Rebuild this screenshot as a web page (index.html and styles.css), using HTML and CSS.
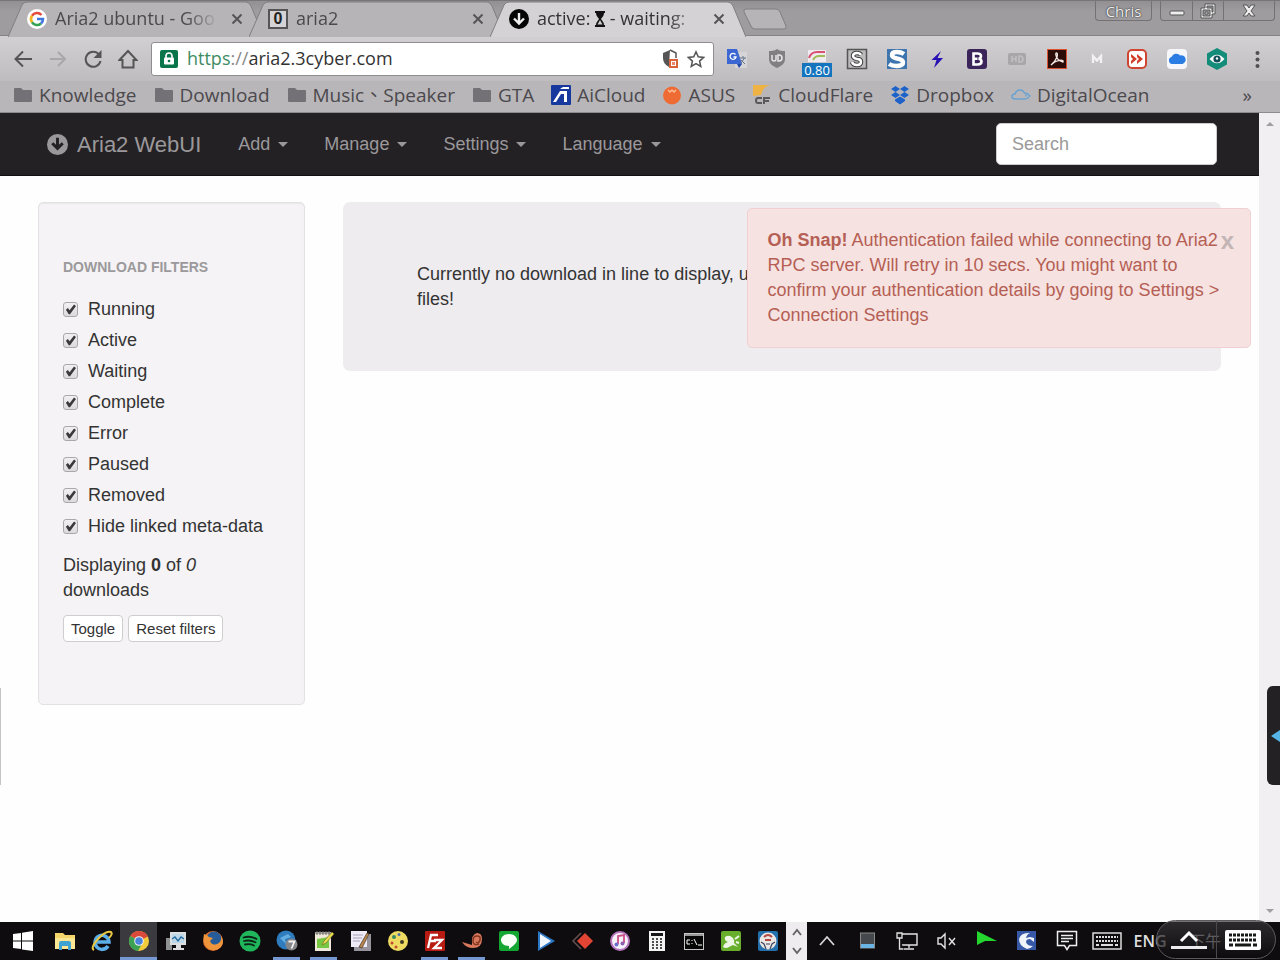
FILE: index.html
```html
<!DOCTYPE html>
<html lang="en">
<head>
<meta charset="utf-8">
<title>Aria2 WebUI</title>
<link rel="stylesheet" href="styles.css">
</head>
<body>
<header class="browser">
  <div class="tabstrip">
    <div class="tab">
      <svg class="tab-shape" viewBox="0 0 256 36" preserveAspectRatio="none"><path d="M0 36L14 4Q16 1 19 1H238Q241 1 243 5L256 36"/></svg>
      <svg class="tab-icon" viewBox="0 0 20 20"><circle cx="10" cy="10" r="10" fill="#fff"/><g fill="none" stroke-width="2.6"><path d="M14.5 6A6 6 0 0 0 5 6.700" stroke="#e34a3b"/><path d="M5 6.700A6 6 0 0 0 5 13.300" stroke="#f2b51d"/><path d="M5 13.300A6 6 0 0 0 14 14.500" stroke="#35a352"/><path d="M14 14.500A6 6 0 0 0 16 10H10" stroke="#3f78e0"/></g></svg>
      <span class="tab-title">Aria2 ubuntu - Goo</span>
      <button class="tab-close" aria-label="Close tab"><svg viewBox="0 0 12 12"><path d="M1.500 1.500l9 9M10.500 1.500l-9 9"/></svg></button>
    </div>
    <div class="tab">
      <svg class="tab-shape" viewBox="0 0 256 36" preserveAspectRatio="none"><path d="M0 36L14 4Q16 1 19 1H238Q241 1 243 5L256 36"/></svg>
      <span class="tab-icon zero-icon">0</span>
      <span class="tab-title">aria2</span>
      <button class="tab-close" aria-label="Close tab"><svg viewBox="0 0 12 12"><path d="M1.500 1.500l9 9M10.500 1.500l-9 9"/></svg></button>
    </div>
    <div class="tab tab-active">
      <svg class="tab-shape" viewBox="0 0 256 36" preserveAspectRatio="none"><path d="M0 36L14 4Q16 1 19 1H238Q241 1 243 5L256 36"/></svg>
      <svg class="tab-icon" viewBox="0 0 20 20"><circle cx="10" cy="10" r="10" fill="#050505"/><path d="M10 4v10M5 9.500l5 5 5-5" fill="none" stroke="#eee" stroke-width="2.400"/></svg>
      <span class="tab-title">active: <svg class="hourglass" viewBox="0 0 10 16"><path d="M0 0h10v2H9c0 3-2 4-3 6 1 2 3 3 3 6h1v2H0v-2h1c0-3 2-4 3-6C3 6 1 5 1 2H0z" fill="#111"/><path d="M5 9l2.500 4.500h-5z" fill="#ccc"/></svg> - waiting:</span>
      <button class="tab-close" aria-label="Close tab"><svg viewBox="0 0 12 12"><path d="M1.500 1.500l9 9M10.500 1.500l-9 9"/></svg></button>
    </div>
    <button class="new-tab" aria-label="New tab"><svg viewBox="0 0 44 22"><path d="M3 1h30q3 0 4 3l6 14q1 3-2 3H12q-3 0-4-3L1 4Q0 1 3 1z"/></svg></button>
    <div class="window-controls">
      <button class="profile">Chris</button>
      <div class="window-buttons">
        <button aria-label="Minimize"><svg viewBox="0 0 16 16"><rect x="1" y="8" width="14" height="4" rx="1"/></svg></button>
        <button aria-label="Restore"><svg viewBox="0 0 16 16"><path fill-rule="evenodd" d="M5 1h10v10h-3v4H1V5h4zM7 3v2h5v4h1V3zM3 7v6h7V7z"/><path d="M5 9h3v2H5z"/></svg></button>
        <button class="wide" aria-label="Close"><svg viewBox="0 0 16 16"><path d="M2 2h4l2 3 2-3h4l-4 6 4 5h-4l-2-3-2 3H2l4-5z"/></svg></button>
      </div>
    </div>
  </div>

  <div class="toolbar">
    <nav class="nav-buttons">
      <button aria-label="Back"><svg viewBox="0 0 20 20"><path d="M19 10H3M10 2.500L2.500 10l7.500 7.500"/></svg></button>
      <button class="dim" aria-label="Forward"><svg viewBox="0 0 20 20"><path d="M2 10h15M10 3l7 7-7 7"/></svg></button>
      <button aria-label="Reload"><svg viewBox="0 0 20 20"><path d="M16 5.500A7.500 7.500 0 1 0 17.500 12"/><path d="M18.500 1v8h-8z" fill="#555" stroke="none"/></svg></button>
      <button aria-label="Home"><svg viewBox="0 0 20 20"><path d="M1.500 11L10 2l8.500 9H15.500v7.500h-11V11z"/></svg></button>
    </nav>
    <div class="omnibox">
      <svg class="lock" viewBox="0 0 18 18"><rect width="18" height="18" rx="2" fill="#08754b"/><path d="M6 8V6a3 3 0 0 1 6 0v2" fill="none" stroke="#fff" stroke-width="1.600"/><rect x="4" y="7.500" width="10" height="7" rx="1" fill="#fff"/><circle cx="9" cy="11" r="1.300" fill="#08754b"/></svg>
      <div class="url"><span class="scheme">https</span><span class="slashes">://</span>aria2.3cyber.com</div>
      <svg class="omni-icon" viewBox="0 0 18 20"><path d="M9 1L2 4v5c0 4 2 7 6 9z" fill="#555"/><path d="M9 1l6 3v5" fill="none" stroke="#555" stroke-width="1.500"/><rect x="8" y="10" width="9" height="9" fill="#d9633b"/><rect x="10.500" y="12.500" width="4" height="4" fill="#e9896a" stroke="#fff"/></svg>
      <svg class="omni-icon" viewBox="0 0 20 20"><path d="M10 2l2.500 5.600 6 .6-4.500 4.100 1.300 6L10 15.200l-5.300 3.100 1.300-6-4.500-4.100 6-.6z" fill="none" stroke="#555" stroke-width="1.700"/></svg>
    </div>
    <div class="extensions">
      <button aria-label="Translate"><svg viewBox="0 0 22 22"><rect x="9" y="4" width="12" height="16" fill="#d5d5d7"/><path d="M1 1h10l5 15H1z" fill="#3c67d2"/><path d="M11 16h5l-3 4z" fill="#234aa9"/><path d="M9.500 6.500A3 3 0 1 0 10 9H7.500" stroke="#fff" stroke-width="1.300" fill="none"/><path d="M13 10h7M17 8v2M18.500 10l-4 6M15 12l4 4" stroke="#65758d" fill="none"/></svg></button>
      <button aria-label="uBlock"><svg viewBox="0 0 22 22"><path d="M11 1c3 2 5 2 8 2v8c0 5-4 7-8 9-4-2-8-4-8-9V3c3 0 5 0 8-2z" fill="#817f83"/><path d="M6 7v4q0 2 2 2t2-2V7M12 7h1q3 0 3 3t-3 3h-1z" fill="none" stroke="#e7e4e7" stroke-width="1.500"/></svg></button>
      <button class="speed" aria-label="Speed"><svg viewBox="0 0 22 22"><path d="M2 2h18v12H2z" fill="#eeeaf0"/><path d="M3 10q2-6 8-6h8" fill="none" stroke="#d95171" stroke-width="2"/><path d="M7 12q2-4 6-4h6" fill="none" stroke="#a3bd56" stroke-width="2"/></svg><span class="speed-badge">0.80</span></button>
      <button aria-label="Stylish"><svg viewBox="0 0 22 22"><rect x="1.500" y="1.500" width="19" height="19" fill="#bdbbbd" stroke="#555" stroke-width="1.500"/><path d="M15 7q-1-2-4-2-4 0-4 3 0 2 4 3 4 0 4 3t-4 3q-4 0-5-3" fill="none" stroke="#444" stroke-width="4.500"/><path d="M15 7q-1-2-4-2-4 0-4 3 0 2 4 3 4 0 4 3t-4 3q-4 0-5-3" fill="none" stroke="#fff" stroke-width="2.400"/></svg></button>
      <button aria-label="Session"><svg viewBox="0 0 22 22"><rect x="1" y="1" width="20" height="20" fill="#3f75ae"/><path d="M18 6q-3-2-7-2-5 0-5 3 0 2.500 5 3.500 6 1 6 4t-6 3.500q-5 0-8-2" fill="none" stroke="#fff" stroke-width="4.500"/></svg></button>
      <button aria-label="Power"><svg viewBox="0 0 22 22"><path d="M15 3L5.500 12h5L8 20l9-10h-5.500z" fill="#2811b4"/></svg></button>
      <button aria-label="Bootstrap"><svg viewBox="0 0 22 22"><rect x="1" y="1" width="20" height="20" rx="3" fill="#3b2459"/><path d="M7.500 5.500V16.500h4q4 0 4-3 0-2.500-3-2.800 2.500-.4 2.500-2.600 0-2.600-4-2.600zM7.500 10.800h4" fill="none" stroke="#fff" stroke-width="2.600"/></svg></button>
      <button aria-label="HD"><svg viewBox="0 0 22 22"><rect x="2" y="5" width="18" height="12" rx="2" fill="#a8a6a9"/><path d="M6 8v6M10 8v6M6 11h4M13 8v6h1q3 0 3-3t-3-3z" fill="none" stroke="#c1bfc2" stroke-width="1.600"/></svg></button>
      <button aria-label="Acrobat"><svg viewBox="0 0 22 22"><rect x="1.500" y="1.500" width="19" height="19" fill="#2c0d0a" stroke="#dd5132"/><path d="M5 17q4-3 6-8 1-4-.5-4t0 4q2 4 6.500 5 1-2-3-1.700-5 .5-9 4.700z" fill="none" stroke="#f4e9e7" stroke-width="1.300"/></svg></button>
      <button aria-label="Mail"><svg viewBox="0 0 22 22"><path d="M7 15V8l4 4.500L15 8v7" fill="none" stroke="#f3f1f3" stroke-width="2.300"/></svg></button>
      <button aria-label="Fast forward"><svg viewBox="0 0 22 22"><rect x="2" y="2" width="18" height="18" rx="4" fill="#fff" stroke="#cf4531" stroke-width="2"/><path d="M5 6l6 5-6 5v-3l2-2-2-2zM11 6l6 5-6 5v-3l2-2-2-2z" fill="#d13d28"/></svg></button>
      <button aria-label="Cloud"><svg viewBox="0 0 22 22"><rect x="1" y="1" width="20" height="20" rx="4" fill="#f5f7fb"/><path d="M6 16a3.600 3.600 0 0 1-.5-7A5 5 0 0 1 14 7.500a4 4 0 0 1 2.500 8.500z" fill="#2b7de4"/></svg></button>
      <button aria-label="Eye"><svg viewBox="0 0 22 22"><path d="M11 0l10 5.500v11L11 22 1 16.500v-11z" fill="#138d79"/><path d="M3.500 11q7.500-8.500 15 0-7.500 8.500-15 0z" fill="#fff"/><circle cx="11" cy="11" r="3.600" fill="#134f59"/><circle cx="11" cy="10.500" r="1.200" fill="#fff"/></svg></button>
      <button aria-label="Menu"><svg viewBox="0 0 22 22"><g fill="#514f52"><circle cx="11.500" cy="5" r="2"/><circle cx="11.500" cy="11.500" r="2"/><circle cx="11.500" cy="18" r="2"/></g></svg></button>
    </div>
  </div>

  <nav class="bookmarks">
    <a href="#"><svg viewBox="0 0 20 20"><path d="M1 4q0-1 1-1h6l2 2h8q1 0 1 1v10q0 1-1 1H2q-1 0-1-1z" fill="#737175"/></svg>Knowledge</a>
    <a href="#"><svg viewBox="0 0 20 20"><path d="M1 4q0-1 1-1h6l2 2h8q1 0 1 1v10q0 1-1 1H2q-1 0-1-1z" fill="#737175"/></svg>Download</a>
    <a href="#"><svg viewBox="0 0 20 20"><path d="M1 4q0-1 1-1h6l2 2h8q1 0 1 1v10q0 1-1 1H2q-1 0-1-1z" fill="#737175"/></svg>Music、Speaker</a>
    <a href="#"><svg viewBox="0 0 20 20"><path d="M1 4q0-1 1-1h6l2 2h8q1 0 1 1v10q0 1-1 1H2q-1 0-1-1z" fill="#737175"/></svg>GTA</a>
    <a href="#"><svg viewBox="0 0 20 20"><rect width="20" height="20" rx="1" fill="#17399d"/><path d="M2 17h3l5-8h3v8h3V6H9z" fill="#fff"/><path d="M9 4h9V2h-6z" fill="#fff"/></svg>AiCloud</a>
    <a href="#"><svg viewBox="0 0 20 20"><circle cx="10" cy="10.500" r="9" fill="#ee6b34"/><path d="M6 5l2 2 2-2 2 2 2-2" fill="none" stroke="#ffc09c" stroke-width="1.300"/></svg>ASUS</a>
    <a href="#"><svg viewBox="0 0 20 20"><path d="M1 0h18q-8 1-10 10L1 11z" fill="#eeb344"/><path d="M10 13H6q-2 0-2 2.500T6 18h4M12 19v-6h6M12 16h5" fill="none" stroke="#5d595b" stroke-width="2"/></svg>CloudFlare</a>
    <a href="#"><svg viewBox="0 0 20 20"><path d="M5.500 1L10 4 5.500 7 1 4zM14.500 1L19 4l-4.500 3L10 4zM5.500 7L10 10l-4.500 3L1 10zM14.500 7L19 10l-4.500 3L10 10zM5 14.500l5-3 5 3v1.500l-5 3.500-5-3.500z" fill="#1d62c9"/></svg>Dropbox</a>
    <a href="#"><svg viewBox="0 0 20 20"><path d="M4 14q-3 0-3-2.500T4 9q1-4 5-4 3 0 4.500 3 3 0 5.500 3-3 3-5 3z" fill="none" stroke="#6ba3d1" stroke-width="1.500"/><circle cx="15" cy="10.500" r="1" fill="#6ba3d1"/></svg>DigitalOcean</a>
    <button class="more" aria-label="More bookmarks">»</button>
  </nav>
</header>

<main class="viewport">
  <div class="page">
    <nav class="navbar">
      <a class="brand" href="#"><svg viewBox="0 0 20 20"><path fill-rule="evenodd" d="M10 0a10 10 0 1 1 0 20 10 10 0 0 1 0-20zM8.600 3.500v6.800L6 7.800 4 9.800l6 6 6-6-2-2-2.600 2.500V3.500z" fill="#9b989b"/></svg>Aria2 WebUI</a>
      <div class="menus">
        <button>Add<span class="caret"></span></button>
        <button>Manage<span class="caret"></span></button>
        <button>Settings<span class="caret"></span></button>
        <button>Language<span class="caret"></span></button>
      </div>
      <input class="search" type="text" placeholder="Search" aria-label="Search">
    </nav>
    <div class="columns">
      <aside class="sidebar">
        <h2>DOWNLOAD FILTERS</h2>
        <div class="filters">
          <label><input type="checkbox" checked>Running</label>
          <label><input type="checkbox" checked>Active</label>
          <label><input type="checkbox" checked>Waiting</label>
          <label><input type="checkbox" checked>Complete</label>
          <label><input type="checkbox" checked>Error</label>
          <label><input type="checkbox" checked>Paused</label>
          <label><input type="checkbox" checked>Removed</label>
          <label><input type="checkbox" checked>Hide linked meta-data</label>
        </div>
        <p>Displaying <strong>0</strong> of <em>0</em> downloads</p>
        <div class="actions"><button>Toggle</button><button>Reset filters</button></div>
      </aside>
      <section class="empty">Currently no download in line to display, use the Add button to start downloading<br>files!</section>
    </div>
    <div class="alert" role="alert">
      <button class="dismiss" aria-label="Dismiss">x</button>
      <strong>Oh Snap!</strong> Authentication failed while connecting to Aria2 RPC server. Will retry in 10 secs. You might want to confirm your authentication details by going to Settings &gt; Connection Settings
    </div>
  </div>
  <div class="scrollbar"><span class="arrow-up"></span><span class="arrow-down"></span></div>
  <div class="left-edge"></div>
  <button class="side-handle" aria-label="Open side panel"><svg viewBox="0 0 9 14"><path d="M9 1v12L0 7z" fill="#55b4e7"/></svg></button>
</main>

<footer class="taskbar">
  <button class="start" aria-label="Start"><svg viewBox="0 0 22 22"><path d="M1 4l8-1v7.500H1zM10 2.800L21 1v9.500H10zM1 11.500h8V19l-8-1zM10 11.500h11V21l-11-1.500z" fill="#fff"/></svg></button>
  <div class="apps">
    <button aria-label="File Explorer"><svg viewBox="0 0 22 22"><path d="M1 3h8l2 2h10v14H1z" fill="#f5d66b"/><path d="M1 8h20v11H1z" fill="#fbe694"/><path d="M5 20v-7q0-2 2-2h8q2 0 2 2v7h-3v-4H8v4z" fill="#3ea3d2"/></svg></button>
    <button aria-label="Internet Explorer"><svg viewBox="0 0 22 22"><path d="M17 16a7 7 0 1 1 1-4H6" fill="none" stroke="#5caee8" stroke-width="3.500"/><path d="M3 20q-4-2 4-11T20 2q2 2-2 6" fill="none" stroke="#ebc840" stroke-width="2"/></svg></button>
    <button class="running current" aria-label="Chrome"><svg viewBox="0 0 22 22"><circle cx="11" cy="11" r="10" fill="#f3cc3c"/><path d="M11 11L2.300 6A10 10 0 0 1 20 6.500z" fill="#da4a3b"/><path d="M11 11L2.300 6A10 10 0 0 0 10 21l4-7z" fill="#3ba255"/><circle cx="11" cy="11" r="4.800" fill="#f3f3f3"/><circle cx="11" cy="11" r="3.800" fill="#4a83dc"/></svg></button>
    <button aria-label="System monitor"><svg viewBox="0 0 22 22"><rect x="1" y="8" width="6" height="12" fill="#8d9192"/><rect x="5" y="2" width="16" height="13" fill="#dcdfe0"/><rect x="7" y="4" width="12" height="9" fill="#bcd8e8"/><path d="M7 9l3-2 3 4 3-4 3 2" fill="none" stroke="#246a9c" stroke-width="1.300"/><path d="M11 15h5v3h3v2H8v-2h3z" fill="#ddd"/></svg></button>
    <button aria-label="Firefox"><svg viewBox="0 0 22 22"><circle cx="11" cy="11" r="10" fill="#df702b"/><circle cx="12" cy="9" r="7.500" fill="#285b9a"/><path d="M2 4q3 1 5 3l4 1-3 3q2 5 7 3 5-2 4-8 4 6 0 11-5 5-12 2Q0 15 2 4z" fill="#ef963c"/></svg></button>
    <button aria-label="Spotify"><svg viewBox="0 0 22 22"><circle cx="11" cy="11" r="10.500" fill="#1fb65c"/><path d="M4.500 7.500q7-2 13 1.500M5 11q6-1.500 11.500 1.300M6 14.500q5-1 9 1" fill="none" stroke="#0d2417" stroke-width="1.800" stroke-linecap="round"/></svg></button>
    <button class="running" aria-label="Seven"><svg viewBox="0 0 22 22"><circle cx="10" cy="10" r="9.500" fill="#2e7cbd"/><path d="M4 8l8-4 3 3-6 2 1 5" fill="#64aee1"/><circle cx="15.500" cy="14.500" r="6" fill="#858689"/><path d="M12.500 11.500h6l-3 7" fill="none" stroke="#f1f1f1" stroke-width="1.800"/></svg></button>
    <button class="running" aria-label="Notepad++"><svg viewBox="0 0 22 22"><rect x="2" y="2" width="16" height="19" fill="#eee9d8"/><path d="M2 3h16M4 1v4M7 1v4M10 1v4M13 1v4M16 1v4" stroke="#666"/><path d="M4 9l12-2v11H4z" fill="#78c743"/><path d="M9 15l2-4 8-9 2 2-8 9z" fill="#eadb4f" stroke="#75702b" stroke-width=".7"/></svg></button>
    <button aria-label="Editor"><svg viewBox="0 0 22 22"><path d="M4 4h17v17H4z" fill="#96939c"/><path d="M1 1h16v16H1z" fill="#eeeaf6"/><path d="M3 5h10M3 8h9M3 11h7" stroke="#aaa0bb"/><path d="M9 17l8-14 2 1-7 14z" fill="#b8864d" stroke="#453427" stroke-width=".7"/></svg></button>
    <button aria-label="Paint"><svg viewBox="0 0 22 22"><circle cx="11" cy="11" r="10" fill="#efdb62"/><g fill="#c4492f"><circle cx="5" cy="13" r="1.500"/><circle cx="9" cy="17" r="1.500"/></g><circle cx="7" cy="7" r="2" fill="#388b63"/><circle cx="12" cy="4.500" r="1.500" fill="#4c71a9"/><circle cx="15" cy="12" r="2" fill="#403b25"/></svg></button>
    <button class="running" aria-label="FileZilla"><svg viewBox="0 0 22 22"><rect x="1" y="1" width="20" height="20" rx="1" fill="#b81b12"/><path d="M4 18L7 5h7M6 11h6M10 10h8l-8 8h8" fill="none" stroke="#fff" stroke-width="2.300"/></svg></button>
    <button class="running" aria-label="Snail"><svg viewBox="0 0 22 22"><path d="M1 12l10 3q-1-11 5-12 5 0 5 6 0 9-9 9Q5 18 1 12z" fill="#d8795d"/><path d="M18 14q-6 2-6-3t4-5 3 4-4 2" fill="none" stroke="#853721" stroke-width="1.500"/></svg></button>
    <button aria-label="Line"><svg viewBox="0 0 22 22"><rect x="1" y="1" width="20" height="20" rx="2" fill="#13a630"/><path d="M11 4c5 0 8 3 8 6s-4 6-8 9v-3c-5 0-8-3-8-6s3-6 8-6z" fill="#f7fff7"/></svg></button>
    <button aria-label="Player"><svg viewBox="0 0 22 22"><path d="M3 1l17 10L3 21z" fill="#2c78c4"/><path d="M5 4l11 7-11 7z" fill="#f1f6fb"/></svg></button>
    <button aria-label="Anydesk"><svg viewBox="0 0 22 22"><path d="M9 3l-8 8 8 8" fill="none" stroke="#665252" stroke-width="1.500"/><path d="M13 3l8 8-8 8-8-8z" fill="#e34535"/></svg></button>
    <button aria-label="iTunes"><svg viewBox="0 0 22 22"><circle cx="11" cy="11" r="9" fill="#f5f2fa" stroke="#b675bd" stroke-width="2"/><path d="M9 14V6l6-1v8" fill="none" stroke="#cb4d86" stroke-width="1.800"/><circle cx="7.500" cy="14.500" r="2" fill="#6b6dce"/><circle cx="13.500" cy="13.500" r="2" fill="#8b60b2"/></svg></button>
    <button aria-label="Calculator"><svg viewBox="0 0 22 22"><path d="M3 1h16v20H3z" fill="#f4f4f4"/><path d="M5 3h12v3H5z" fill="#171719"/><path d="M6 9h10M6 12h10M6 15h10M6 18h10" stroke="#171719" stroke-width="1.500" stroke-dasharray="2 2"/></svg></button>
    <button aria-label="Command prompt"><svg viewBox="0 0 22 22"><rect x="1.500" y="3.500" width="19" height="16" fill="#060606" stroke="#c6c6c6"/><path d="M2 5h18" stroke="#999" stroke-width="2"/><path d="M7 10H4v4h3M9 10v1M9 13v1M11 9l3 6M15 15h4" fill="none" stroke="#fff"/></svg></button>
    <button aria-label="Green utility"><svg viewBox="0 0 22 22"><rect x="1" y="1" width="20" height="20" rx="2" fill="#67ae2c"/><path d="M3 17q1-4 5-5-4-1-3-5 4-3 8 1 2 3 1 5l4 4-5-2-4 2q-3 2-6 0z" fill="#edf6e5"/><path d="M15 9l4-3M16 12l3 1" stroke="#edf6e5" stroke-width="2"/></svg></button>
    <button aria-label="Game"><svg viewBox="0 0 22 22"><rect x="1" y="1" width="20" height="20" rx="2" fill="#2370ad"/><circle cx="11" cy="11" r="8.500" fill="#ece6e4"/><path d="M7 7q4-4 8 0M8 10h6" fill="none" stroke="#b34a45" stroke-width="2"/><path d="M4 12l3 2 2 5M18 12l-3 2-2 5M9 14h4" fill="none" stroke="#39465d" stroke-width="1.200"/></svg></button>
  </div>
  <div class="app-scroll">
    <button aria-label="Scroll up"><svg viewBox="0 0 10 8"><path d="M1 7l4-5 4 5"/></svg></button>
    <button aria-label="Scroll down"><svg viewBox="0 0 10 8"><path d="M1 1l4 5 4-5"/></svg></button>
  </div>
  <div class="tray">
    <button aria-label="Show hidden icons"><svg viewBox="0 0 22 22"><path d="M4 15l7-8 7 8" fill="none" stroke="#d5d5d5" stroke-width="1.800"/></svg></button>
    <button aria-label="Disk"><svg viewBox="0 0 22 22"><rect x="4.500" y="3" width="14" height="15" fill="#45484c" stroke="#888"/><path d="M5 14h13v4H5z" fill="#69b4e5"/></svg></button>
    <button aria-label="Network"><svg viewBox="0 0 22 22"><path d="M6 4h15v11H6M13 15v3M8 19h10" fill="none" stroke="#e4e4e4" stroke-width="1.400"/><path d="M1 3h5v5H1zM3.500 8v11h4" fill="#151517" stroke="#e4e4e4" stroke-width="1.300"/></svg></button>
    <button aria-label="Muted"><svg viewBox="0 0 22 22"><path d="M2 8h3l4-4v14l-4-4H2zM13 8l6 7M19 8l-6 7" fill="none" stroke="#e4e4e4" stroke-width="1.400"/></svg></button>
    <button aria-label="Remote"><svg viewBox="0 0 22 22"><path d="M1 1l20 10H9L1 15z" fill="#24d62d"/></svg></button>
    <button aria-label="Sync"><svg viewBox="0 0 22 22"><rect x="1" y="1" width="19" height="19" fill="#3658a7"/><path d="M14 3Q5 2 3 9q0 7 8 10 3 0 6-3-6 0-7-4 0-3 4-3l4 3V8l-4-1-4 1q1-4 4-5z" fill="#eff3fa"/></svg></button>
    <button aria-label="Notifications"><svg viewBox="0 0 22 22"><path d="M1.500 1.500h19v14h-7l-2.500 4-2.500-4h-7zM5 5.500h12M5 8.500h12M5 11.500h8" fill="none" stroke="#eee" stroke-width="1.500"/></svg></button>
    <button aria-label="Keyboard"><svg class="keyboard" viewBox="0 0 30 20"><rect x="1" y="2" width="28" height="16" fill="none" stroke="#ddd" stroke-width="1.500"/><path d="M4 6h22M4 10h22" stroke="#ddd" stroke-width="2" stroke-dasharray="2 1"/><path d="M4 14h3M9 14h12M23 14h3" stroke="#ddd" stroke-width="2"/></svg></button>
    <button class="language">ENG</button>
    <span class="clock">下午 0</span>
  </div>
  <div class="float-pad">
    <button aria-label="Collapse"><svg viewBox="0 0 36 20"><path d="M10 11l8-8 8 8" fill="none" stroke="#fff" stroke-width="3"/><path d="M0 16h36v3H0z" fill="#ececec"/></svg></button>
    <button aria-label="On-screen keyboard"><svg viewBox="0 0 36 20"><rect width="36" height="20" rx="2" fill="#fff"/><path d="M4 5h28M4 10h28" stroke="#181818" stroke-width="3" stroke-dasharray="3 1"/><path d="M4 15h4M10 15h16M28 15h4" stroke="#181818" stroke-width="3"/></svg></button>
  </div>
</footer>
</body>
</html>
```

FILE: styles.css
```css
* { box-sizing: border-box; }
html, body { height: 100%; }
body {
  margin: 0;
  min-height: 100vh;
  display: flex;
  flex-direction: column;
  overflow: hidden;
  background: #fefefe;
  color: #333;
  font: 18px/25px "Liberation Sans", Arial, sans-serif;
}
button { font: inherit; color: inherit; border: 0; padding: 0; background: none; }
svg { display: block; flex: none; }
a { color: inherit; text-decoration: none; }

.browser {
  background: #b9b6b9;
  color: #4b494d;
  font-family: "Open Sans", "Noto Sans CJK TC", sans-serif;
  border-bottom: 1px solid #8d8b8e;
}
.tabstrip {
  display: flex;
  height: 36px;
  padding-left: 8px;
  background: linear-gradient(#929093, #9e9c9f 30%, #9e9c9f);
  border-top: 1px solid #777578;
  box-shadow: inset 0 -1px #858386;
}
.tab {
  position: relative;
  display: flex;
  align-items: center;
  width: 256px;
  height: 36px;
  margin-right: -15px;
  padding: 0 21px 1px 19px;
}
.tab-shape { position: absolute; inset: 0; width: 100%; height: 100%; fill: #b7b4b7; stroke: #807e81; }
.tab-active { z-index: 1; }
.tab-active .tab-shape { fill: #d5d2d5; }
.tab-icon { position: relative; width: 20px; height: 20px; margin-right: 8px; }
.zero-icon { border: 2px solid #555; background: #d5d3d5; color: #222; font: bold 16px/16px "Liberation Sans", sans-serif; text-align: center; }
.tab-title {
  position: relative;
  flex: 1;
  overflow: hidden;
  white-space: nowrap;
  font-size: 18px;
  -webkit-mask-image: linear-gradient(90deg, #000 80%, transparent);
  mask-image: linear-gradient(90deg, #000 80%, transparent);
}
.tab-active .tab-title { color: #333; }
.hourglass { display: inline-block; width: 10px; height: 16px; vertical-align: -2px; }
.tab-close { position: relative; margin-left: 12px; }
.tab-close svg { width: 12px; height: 12px; stroke: #555; stroke-width: 2; }
.new-tab { margin: 0 0 0 12px; }
.new-tab svg { width: 44px; height: 22px; fill: #b7b4b7; stroke: #807e81; }
.window-controls { display: flex; gap: 8px; margin-left: auto; padding-right: 5px; }
.profile { width: 57px; height: 20px; border: 1px solid #737174; border-top: 0; border-radius: 0 0 4px 4px; font-size: 15px; line-height: 20px; color: #eee; text-shadow: 0 0 2px #333, 0 0 1px #333; }
.window-buttons { display: flex; height: 20px; border: 1px solid #737174; border-top: 0; border-radius: 0 0 4px 4px; }
.window-buttons button { width: 31px; display: grid; place-items: center; }
.window-buttons button + button { border-left: 1px solid #737174; }
.window-buttons .wide { width: 51px; }
.window-buttons svg { width: 16px; height: 16px; fill: #eee; stroke: #555; }

.toolbar {
  display: flex;
  align-items: center;
  height: 45px;
  padding: 0 3px 0 5px;
  background: linear-gradient(#d2d0d2, #bfbcbf);
}
.nav-buttons { display: flex; }
.nav-buttons button { width: 35px; display: grid; place-items: center; }
.nav-buttons svg { width: 20px; height: 20px; fill: none; stroke: #555; stroke-width: 2; }
.nav-buttons .dim svg { stroke: #a9a7aa; }
.omnibox {
  flex: 1;
  display: flex;
  align-items: center;
  height: 34px;
  margin: 0 3px 0 6px;
  padding: 0 8px;
  background: #fff;
  border: 1px solid #8f8d90;
  border-radius: 3px;
}
.lock { width: 18px; height: 18px; margin-right: 9px; }
.url { flex: 1; color: #333; font-size: 18px; }
.scheme { color: #3e8c62; }
.slashes { color: #888; }
.omni-icon { width: 18px; height: 20px; margin-left: 8px; }
.extensions { display: flex; }
.extensions button { position: relative; width: 40px; height: 34px; display: grid; place-items: center; }
.extensions svg { width: 22px; height: 22px; }
.speed-badge { position: absolute; left: 5px; bottom: -1px; width: 30px; background: #1574be; color: #fff; font: 13px/14px "Open Sans", sans-serif; text-align: center; }

.bookmarks {
  display: flex;
  align-items: center;
  gap: 17px;
  height: 31px;
  padding: 0 28px 4px 13px;
  font-size: 19px;
  line-height: 26px;
  white-space: nowrap;
}
.bookmarks a { display: flex; align-items: center; gap: 6px; }
.bookmarks svg { width: 20px; height: 20px; }
.more { margin-left: auto; }

.viewport { position: relative; display: flex; flex: 1; min-height: 0; }
.page { position: relative; flex: 1; }
.navbar {
  display: flex;
  align-items: center;
  height: 63px;
  padding: 0 42px 0 47px;
  background: #242124;
  border-bottom: 1px solid #121012;
  color: #9b989b;
}
.brand { display: flex; align-items: center; gap: 9px; margin-right: 37px; font-size: 22px; }
.brand svg { width: 21px; height: 21px; }
.menus { display: flex; gap: 36px; }
.menus button { display: flex; align-items: center; gap: 8px; }
.caret { border: 5px solid transparent; border-top-color: #9b989b; border-bottom: 0; }
.search {
  width: 221px;
  height: 42px;
  margin-left: auto;
  padding: 0 15px;
  border: 1px solid #ccc;
  border-radius: 5px;
  background: #fff;
  font: inherit;
}
.search::placeholder { color: #999; }
.columns { display: flex; align-items: flex-start; gap: 38px; padding: 26px 38px; }
.sidebar {
  width: 267px;
  padding: 52px 24px 62px;
  background: #f5f3f5;
  border: 1px solid #e3e1e3;
  border-radius: 5px;
  box-shadow: inset 0 1px 1px #e9e7e9;
}
.sidebar h2 { margin: 0 0 17px; color: #9b999b; font-size: 14px; line-height: 25px; }
.filters { display: flex; flex-direction: column; gap: 6px; }
.filters label { display: flex; align-items: center; gap: 10px; }
.filters input {
  appearance: none;
  display: grid;
  place-items: center;
  width: 15px;
  height: 15px;
  margin: 0;
  border: 1px solid #aaa8aa;
  border-radius: 3px;
  background: linear-gradient(#f2f0f2, #dcdadc);
}
.filters input:checked::before {
  content: "";
  width: 11px;
  height: 11px;
  background: #3b393c;
  clip-path: polygon(8% 52%, 26% 36%, 42% 56%, 82% 4%, 100% 18%, 46% 94%, 34% 94%);
}
.sidebar p { width: 160px; margin: 14px 0 12px; }
.actions { display: flex; gap: 5px; }
.actions button { height: 27px; padding: 0 7px; background: #fff; border: 1px solid #cfcdcf; border-radius: 4px; font-size: 15px; line-height: 25px; white-space: nowrap; }
.empty { flex: 1; padding: 60px 74px 59px; background: #eeecee; border-radius: 7px; }
.alert {
  position: absolute;
  top: 95px;
  right: 8px;
  width: 40%;
  padding: 19px 30px 19px 19px;
  background: #f5e2e1;
  border: 1px solid #f0d0d2;
  border-radius: 5px;
  color: #b55f54;
}
.dismiss { position: absolute; top: 19px; right: 16px; color: #c3b5b6; font-size: 24px; font-weight: bold; }
.scrollbar {
  display: flex;
  flex-direction: column;
  justify-content: space-between;
  align-items: center;
  width: 21px;
  padding: 9px 0;
  background: #f1eff2;
}
.arrow-up, .arrow-down { border: 4px solid transparent; }
.arrow-up { border-bottom-color: #a09ea1; border-top: 0; }
.arrow-down { border-top-color: #a09ea1; border-bottom: 0; }
.side-handle { position: absolute; right: 0; top: 573px; width: 13px; height: 99px; display: flex; align-items: center; justify-content: flex-end; background: #242124; border-radius: 6px 0 0 6px; }
.side-handle svg { width: 9px; height: 14px; }
.left-edge { position: absolute; left: 0; top: 575px; width: 1px; height: 97px; background: #c5c3c6; }

.taskbar { position: relative; display: flex; height: 38px; background: #0e0c0f; }
.taskbar button { display: grid; place-items: center; }
.taskbar svg { width: 22px; height: 22px; }
.start { width: 46px; }
.apps { display: flex; width: 740px; }
.apps button { flex: 1; position: relative; }
.apps .running::after { content: ""; position: absolute; left: 5px; right: 5px; bottom: 0; height: 3px; background: #7598d2; }
.apps .current { background: #3b3a3e; }
.apps .current::after { left: 0; right: 0; }
.app-scroll { display: flex; flex-direction: column; justify-content: space-around; width: 21px; background: #eeecef; }
.app-scroll button { width: 100%; }
.app-scroll svg { width: 10px; height: 8px; fill: none; stroke: #666; stroke-width: 2; }
.tray { display: flex; align-items: center; flex: 1; color: #ddd; font-family: "Open Sans", "Noto Sans CJK TC", sans-serif; font-size: 16px; white-space: nowrap; }
.tray button { width: 40px; }
.tray .keyboard { width: 30px; height: 20px; }
.tray .language { width: 46px; font-weight: 600; }
.clock { margin-left: 16px; color: #ddd; }
.float-pad {
  position: absolute;
  right: 4px;
  bottom: 1px;
  display: flex;
  width: 120px;
  height: 39px;
  padding: 0 6px;
  border: 1px solid #5b595c;
  border-radius: 20px;
  background: linear-gradient(rgba(58, 56, 59, .7), rgba(12, 10, 13, .7));
}
.float-pad button { flex: 1; }
.float-pad button + button { border-left: 1px solid #4b494c; }
.float-pad svg { width: 36px; height: 20px; }
```
